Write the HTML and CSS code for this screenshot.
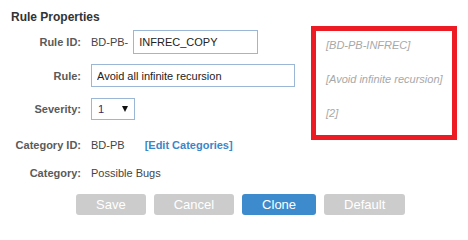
FILE: index.html
```html
<!DOCTYPE html>
<html>
<head>
<meta charset="utf-8">
<link rel="stylesheet" href="styles.css">
</head>
<body>
<div class="page">
  <div class="top">
    <div class="form">
      <div class="title">Rule Properties</div>
      <div class="grid">
        <div class="label">Rule ID:</div>
        <div class="value"><span class="prefix">BD-PB-</span><input class="input id-input" type="text" value="INFREC_COPY"></div>
        <div class="label">Rule:</div>
        <div class="value"><input class="input rule-input" type="text" value="Avoid all infinite recursion"></div>
        <div class="label">Severity:</div>
        <div class="value"><div class="select"><span class="sel-val">1</span><span class="arrow"></span></div></div>
        <div class="label">Category ID:</div>
        <div class="value"><span>BD-PB</span><a class="link" href="#">[Edit Categories]</a></div>
        <div class="label">Category:</div>
        <div class="value"><span>Possible Bugs</span></div>
      </div>
    </div>
    <div class="box">
      <div class="box-line">[BD-PB-INFREC]</div>
      <div class="box-line">[Avoid infinite recursion]</div>
      <div class="box-line">[2]</div>
    </div>
  </div>
  <div class="buttons">
    <button class="btn btn-gray">Save</button>
    <button class="btn btn-gray">Cancel</button>
    <button class="btn btn-blue">Clone</button>
    <button class="btn btn-gray">Default</button>
  </div>
</div>
</body>
</html>
```
FILE: styles.css
```css
html, body {
  margin: 0;
  padding: 0;
  background: #ffffff;
}
body {
  font-family: "Liberation Sans", Arial, sans-serif;
  font-size: 11px;
  color: #444444;
}
.page {
  padding: 10px 11px;
}
.top {
  display: flex;
  align-items: flex-start;
}
.form {
  width: 300px;
}
.title {
  font-size: 12px;
  font-weight: bold;
  line-height: 14px;
  color: #333333;
}
.grid {
  margin-top: 1px;
  display: grid;
  grid-template-columns: 70px auto;
  grid-template-rows: 34px 33px 34px 37px 20px;
  column-gap: 10px;
  align-items: center;
}
.label {
  text-align: right;
  font-weight: bold;
  color: #5a5a5a;
  white-space: nowrap;
}
.value {
  display: flex;
  align-items: center;
  white-space: nowrap;
  color: #444444;
}
.prefix {
  margin-right: 5px;
}
.input {
  box-sizing: border-box;
  border: 1px solid #9cb7d5;
  border-radius: 0;
  padding: 0 5px;
  font-family: "Liberation Sans", Arial, sans-serif;
  font-size: 11px;
  color: #222222;
  outline: none;
  margin: 0;
}
.id-input {
  width: 125px;
  height: 24px;
}
.rule-input {
  width: 204px;
  height: 23px;
}
.select {
  box-sizing: border-box;
  width: 44px;
  height: 22px;
  border: 1px solid #9cb7d5;
  display: flex;
  align-items: center;
  justify-content: space-between;
  padding: 0 6px 0 6px;
}
.sel-val {
  color: #3c1f6e;
}
.arrow {
  width: 0;
  height: 0;
  border-left: 3px solid transparent;
  border-right: 3px solid transparent;
  border-top: 6px solid #111111;
}
.link {
  margin-left: 20px;
  color: #3b86c8;
  font-weight: bold;
  text-decoration: none;
}
.box {
  box-sizing: border-box;
  margin-top: 16px;
  width: 146px;
  height: 114px;
  border: 5px solid #ed1c24;
  padding: 6px 0 0 10px;
  color: #a8a8a8;
  font-style: italic;
}
.box-line {
  line-height: 16px;
  margin-bottom: 18px;
  white-space: nowrap;
}
.buttons {
  margin-top: 11px;
  margin-left: 65px;
  display: flex;
  gap: 8px;
}
.btn {
  height: 21px;
  padding: 0 20px;
  border: none;
  border-radius: 3px;
  font-family: "Liberation Sans", Arial, sans-serif;
  font-size: 13px;
  line-height: 21px;
  color: #ffffff;
  margin: 0;
}
.btn-gray {
  background: #cccccc;
}
.btn-blue {
  background: #3d8bcc;
}
```
